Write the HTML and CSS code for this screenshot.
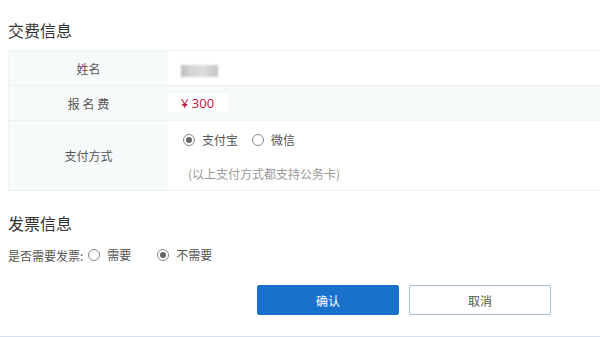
FILE: index.html
```html
<!DOCTYPE html>
<html lang="zh-CN">
<head>
    <meta charset="UTF-8">
    <meta name="viewport" content="width=device-width, initial-scale=1.0">
    <title>交费信息</title>
    <link rel="stylesheet" href="styles.css">
</head>
<body>
    <div class="page">
        <h2 class="section-title">交费信息</h2>

        <table class="pay-table">
            <tr class="row-name">
                <th>姓名</th>
                <td><span class="blur-name"></span></td>
            </tr>
            <tr class="row-fee">
                <th>报 名 费</th>
                <td class="fee-cell"><span class="price">¥ 300</span></td>
            </tr>
            <tr class="row-method">
                <th>支付方式</th>
                <td>
                    <div class="radio-group">
                        <label class="radio"><span class="dot checked"></span>支付宝</label>
                        <label class="radio"><span class="dot"></span>微信</label>
                    </div>
                    <div class="note">(以上支付方式都支持公务卡)</div>
                </td>
            </tr>
        </table>

        <h2 class="section-title invoice-title">发票信息</h2>

        <div class="invoice-row">
            <span class="invoice-label">是否需要发票:</span>
            <label class="radio"><span class="dot"></span>需要</label>
            <label class="radio radio-far"><span class="dot checked"></span>不需要</label>
        </div>

        <div class="actions">
            <button class="btn btn-primary">确认</button>
            <button class="btn btn-cancel">取消</button>
        </div>
    </div>
    <div class="bottom-line"></div>
</body>
</html>
```

FILE: styles.css
```css
body {
    margin: 0;
    font-family: "Noto Sans CJK SC", "Noto Sans", sans-serif;
    color: #555;
    background: #fff;
    overflow: hidden;
}
.page {
    padding-left: 8px;
}
.section-title {
    margin: 0;
    padding-top: 20px;
    font-size: 16px;
    line-height: 20px;
    font-weight: normal;
    color: #333;
}
.pay-table {
    width: 620px;
    margin-top: 10px;
    border-collapse: collapse;
    font-size: 12px;
}
.pay-table th,
.pay-table td {
    border-top: 1px solid #eef1f3;
    border-bottom: 1px solid #eef1f3;
    padding: 0;
}
.pay-table th {
    width: 159px;
    background-color: #f7fafb;
    font-weight: normal;
    color: #555;
    text-align: center;
    border-left: 1px solid #f0f3f5;
}
.pay-table td {
    background-color: #fff;
    text-align: left;
}
.row-name th,
.row-name td {
    height: 34px;
}
.row-fee th,
.row-fee td {
    height: 34px;
}
.row-method th,
.row-method td {
    height: 69px;
}
.blur-name {
    display: inline-block;
    width: 37px;
    height: 12px;
    margin-left: 13px;
    margin-top: 4px;
    background: linear-gradient(90deg, #bdbdbd 0%, #d4d4d4 25%, #dcdcdc 60%, #c4c4c4 100%);
    filter: blur(1px);
    vertical-align: middle;
}
.pay-table td.fee-cell {
    background-color: #f7fafb;
}
.price {
    display: inline-block;
    padding: 0 14px 0 13px;
    line-height: 18px;
    background: #fff;
    color: #c0143c;
    font-family: "Open Sans", "Noto Sans CJK SC", sans-serif;
    font-size: 13px;
}
.radio-group {
    display: flex;
    gap: 14px;
    padding-left: 15px;
    padding-top: 2px;
}
.radio {
    display: inline-flex;
    align-items: center;
    font-size: 12px;
    color: #555;
    line-height: 18px;
}
.dot {
    box-sizing: border-box;
    width: 12px;
    height: 12px;
    border: 1px solid #888;
    border-radius: 50%;
    margin-right: 7px;
    position: relative;
    background: #fff;
}
.dot.checked::after {
    content: "";
    position: absolute;
    left: 2px;
    top: 2px;
    width: 6px;
    height: 6px;
    border-radius: 50%;
    background: #666;
}
.note {
    padding-left: 20px;
    margin-top: 16px;
    color: #999;
    font-size: 12px;
    line-height: 18px;
}
.invoice-title {
    padding-top: 22px;
}
.invoice-row {
    display: flex;
    align-items: center;
    margin-top: 13px;
    height: 18px;
    font-size: 12px;
}
.invoice-label {
    margin-right: 5px;
}
.radio-far {
    margin-left: 26px;
}
.actions {
    display: flex;
    gap: 10px;
    margin-top: 21px;
    padding-left: 249px;
}
.btn {
    box-sizing: border-box;
    width: 142px;
    height: 30px;
    border-radius: 2px;
    font-family: "Noto Sans CJK SC", sans-serif;
    font-size: 12px;
    cursor: pointer;
}
.btn-primary {
    background-color: #1872cc;
    border: 1px solid #1872cc;
    color: #fff;
}
.btn-cancel {
    background-color: #fff;
    border: 1px solid #a9bfd9;
    color: #555;
}
.bottom-line {
    margin-top: 21px;
    height: 2px;
    background: #d6e0ea;
}
```
